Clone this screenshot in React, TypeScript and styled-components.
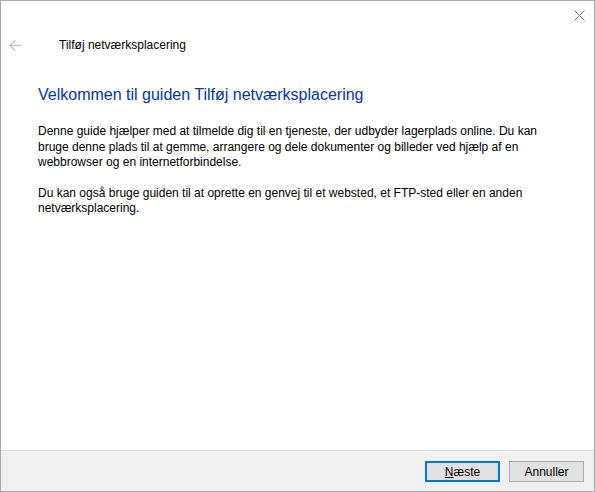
import React from 'react';
import styled, { createGlobalStyle } from 'styled-components';

const GlobalStyle = createGlobalStyle`
    html, body {
        margin: 0;
        padding: 0;
        background: #ffffff;
    }
    body {
        font-family: "Segoe UI", "Liberation Sans", Arial, sans-serif;
    }
`;

// 창 전체
const WizardWindow = styled.div`
    width: 595px;
    height: 492px;
    box-sizing: border-box;
    border: 1px solid #a9a9a9;
    background: #ffffff;
    display: flex;
    flex-direction: column;
    position: relative;
    overflow: hidden;
`;

// 바탕화면이 살짝 비치는 윗줄
const DesktopPeek = styled.div`
    position: absolute;
    top: -1px;
    left: 36px;
    height: 1px;
    width: 34px;
    background: linear-gradient(90deg, #b9a56a 0 50%, #5f8fa8 50% 100%);
`;

const TitleBar = styled.div`
    height: 29px;
    display: flex;
    justify-content: flex-end;
    align-items: flex-start;
`;

const CloseButton = styled.button`
    width: 30px;
    height: 29px;
    border: none;
    background: transparent;
    padding: 0;
    display: flex;
    align-items: center;
    justify-content: center;
    cursor: pointer;
`;

const NavRow = styled.div`
    height: 30px;
    display: flex;
    align-items: center;
`;

const BackButton = styled.button`
    width: 28px;
    height: 30px;
    border: none;
    background: transparent;
    padding: 0;
    display: flex;
    align-items: center;
    justify-content: center;
`;

const WizardTitle = styled.span`
    margin-left: 30px;
    font-size: 12px;
    color: #000000;
`;

const Content = styled.div`
    flex: 1;
    padding: 24px 0 0 37px;
`;

const Heading = styled.h1`
    margin: 0 0 18px 0;
    font-size: 16px;
    font-weight: normal;
    color: #0033bc;
    line-height: 22px;
`;

const Paragraph = styled.p`
    margin: 0 0 15px 0;
    font-size: 12px;
    line-height: 15.5px;
    color: #000000;
    white-space: nowrap;
`;

const Footer = styled.div`
    height: 40px;
    border-top: 1px solid #dfdfdf;
    background: #f0f0f0;
    display: flex;
    justify-content: flex-end;
    align-items: center;
    gap: 9px;
    padding-right: 10px;
`;

const Button = styled.button<{ $primary?: boolean }>`
    width: 75px;
    height: 21px;
    box-sizing: border-box;
    background: #e1e1e1;
    border: ${(p) => (p.$primary ? '2px solid #0078d7' : '1px solid #adadad')};
    font-family: "Segoe UI", "Liberation Sans", Arial, sans-serif;
    font-size: 12px;
    color: #000000;
    padding: 0;
    margin-top: 1px;
    u {
        text-decoration: underline;
    }
`;

const App = () => {
    return (
        <>
            <GlobalStyle />
            <WizardWindow>
                <DesktopPeek />
                <TitleBar>
                    <CloseButton aria-label="Luk">
                        <svg width="11" height="11" viewBox="0 0 11 11">
                            <path d="M0.5 0.5 L10.5 10.5 M10.5 0.5 L0.5 10.5" stroke="#6f6f6f" strokeWidth="1" />
                        </svg>
                    </CloseButton>
                </TitleBar>
                <NavRow>
                    <BackButton aria-label="Tilbage">
                        <svg width="13" height="11" viewBox="0 0 13 11">
                            <path d="M6 0.5 L1 5.5 L6 10.5 M1 5.5 L12.5 5.5" stroke="#c4c4c4" strokeWidth="1.4" fill="none" />
                        </svg>
                    </BackButton>
                    <WizardTitle>Tilføj netværksplacering</WizardTitle>
                </NavRow>
                <Content>
                    <Heading>Velkommen til guiden Tilføj netværksplacering</Heading>
                    <Paragraph>
                        Denne guide hjælper med at tilmelde dig til en tjeneste, der udbyder lagerplads online. Du kan
                        <br />
                        bruge denne plads til at gemme, arrangere og dele dokumenter og billeder ved hjælp af en
                        <br />
                        webbrowser og en internetforbindelse.
                    </Paragraph>
                    <Paragraph>
                        Du kan også bruge guiden til at oprette en genvej til et websted, et FTP-sted eller en anden
                        <br />
                        netværksplacering.
                    </Paragraph>
                </Content>
                <Footer>
                    <Button $primary><u>N</u>æste</Button>
                    <Button>Annuller</Button>
                </Footer>
            </WizardWindow>
        </>
    );
};

export default App;
